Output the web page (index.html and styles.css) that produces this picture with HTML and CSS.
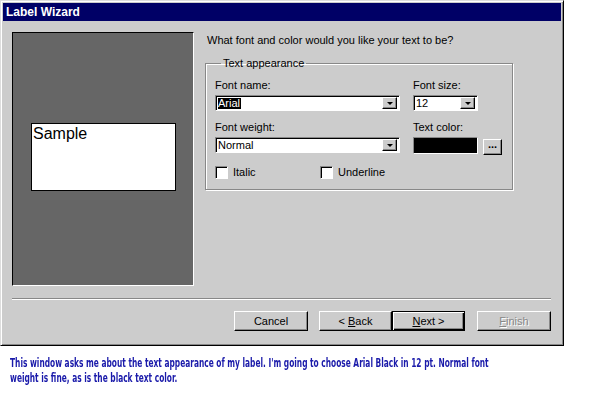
FILE: index.html
```html
<!DOCTYPE html>
<html lang="en">

<head>
    <meta charset="UTF-8">
    <title>Label Wizard</title>
    <link rel="stylesheet" href="styles.css">
</head>

<body>
    <div class="window">
        <div class="titleBar">Label Wizard</div>
        <div class="content">
            <div class="preview">
                <div class="sampleBox">Sample</div>
            </div>
            <div class="options">
                <p class="question">What font and color would you like your text to be?</p>
                <fieldset class="group">
                    <legend>Text appearance</legend>
                    <div class="grid">
                        <div class="field">
                            <label>Font name:</label>
                            <div class="combo"><span class="value selected">Arial</span><span class="arrow"></span></div>
                        </div>
                        <div class="field">
                            <label>Font size:</label>
                            <div class="combo small"><span class="value">12</span><span class="arrow"></span></div>
                        </div>
                        <div class="field">
                            <label>Font weight:</label>
                            <div class="combo"><span class="value">Normal</span><span class="arrow"></span></div>
                        </div>
                        <div class="field">
                            <label>Text color:</label>
                            <div class="colorRow">
                                <div class="swatch"></div>
                                <div class="btn dots">...</div>
                            </div>
                        </div>
                    </div>
                    <div class="checks">
                        <div class="check"><span class="box"></span>Italic</div>
                        <div class="check"><span class="box"></span>Underline</div>
                    </div>
                </fieldset>
            </div>
        </div>
        <div class="separator"></div>
        <div class="buttons">
            <div class="btn">Cancel</div>
            <div class="navBtns">
                <div class="btn"><span>&lt;&nbsp;<u>B</u>ack</span></div>
                <div class="btn default"><span><u>N</u>ext &gt;</span></div>
            </div>
            <div class="btn disabled"><span><u>F</u>inish</span></div>
        </div>
    </div>
    <div class="captionWrap">
        <p class="caption">This window asks me about the text appearance of my label. I'm going to choose Arial Black in 12 pt. Normal font weight is fine, as is the black text color.</p>
    </div>
</body>

</html>
```

FILE: styles.css
```css
* {
    padding: 0px;
    margin: 0px;
    box-sizing: border-box;
}

body {
    background-color: #fff;
    font-family: "Liberation Sans", Arial, sans-serif;
    font-size: 11px;
    color: #000;
}

.window {
    width: 564px;
    height: 346px;
    background-color: #ccc;
    border: 1px solid;
    border-color: #ddd #000 #000 #ddd;
    box-shadow: inset 1px 1px 0 #fff, inset -1px -1px 0 #888;
    padding: 2px;
}

.titleBar {
    height: 18px;
    background-color: #006;
    color: #fff;
    font-weight: bold;
    font-size: 12px;
    line-height: 18px;
    padding-left: 3px;
}

.content {
    display: flex;
    padding: 11px 0px 0px 9px;
}

.preview {
    width: 182px;
    height: 254px;
    background-color: #666;
    border: 1px solid;
    border-color: #000 #fff #fff #000;
    padding: 90px 0px 0px 18px;
}

.sampleBox {
    width: 145px;
    height: 68px;
    background-color: #fff;
    border: 1px solid #000;
    font-size: 16px;
    padding: 0px 1px;
    line-height: 20px;
}

.options {
    margin-left: 11px;
}

.question {
    margin-left: 2px;
    margin-top: 1px;
    height: 14px;
    line-height: 14px;
}

.group {
    margin-top: 10px;
    width: 308px;
    height: 133px;
    border: 1px solid #888;
    box-shadow: 1px 1px 0 #fff, inset 1px 1px 0 #fff;
    padding: 0px 9px;
}

.group legend {
    margin-left: 6px;
    padding: 0px 2px;
    line-height: 12px;
}

.grid {
    display: grid;
    grid-template-columns: 185px 65px;
    column-gap: 13px;
    row-gap: 10px;
    margin-top: 10px;
}

.field label {
    display: block;
    height: 16px;
    line-height: 13px;
}

.combo {
    display: flex;
    height: 16px;
    background-color: #fff;
    border: 1px solid;
    border-color: #888 #fff #fff #888;
    box-shadow: inset 1px 1px 0 #000;
    padding: 2px 2px 1px 2px;
}

.combo .value {
    flex: 1;
    line-height: 11px;
    font-size: 11px;
}

.combo .value.selected {
    flex: none;
    background-color: #000;
    color: #fff;
    padding-right: 1px;
}

.combo .selected + .arrow {
    margin-left: auto;
}

.arrow {
    position: relative;
    width: 15px;
    height: 12px;
    margin-top: -1px;
    background-color: #ccc;
    border: 1px solid;
    border-color: #fff #000 #000 #fff;
    box-shadow: inset -1px -1px 0 #888;
}

.arrow::after {
    content: "";
    position: absolute;
    left: 4px;
    top: 4px;
    border-left: 3px solid transparent;
    border-right: 3px solid transparent;
    border-top: 3px solid #000;
}

.colorRow {
    display: flex;
    gap: 5px;
}

.swatch {
    width: 65px;
    height: 17px;
    flex: none;
    background-color: #000;
    border: 1px solid;
    border-color: #888 #fff #fff #888;
}

.btn {
    display: flex;
    justify-content: center;
    align-items: center;
    width: 74px;
    height: 20px;
    background-color: #ccc;
    border: 1px solid;
    border-color: #fff #000 #000 #fff;
    box-shadow: inset -1px -1px 0 #888;
}

.btn.dots {
    width: 19px;
    height: 16px;
    flex: none;
    margin-top: 2px;
    font-weight: bold;
    line-height: 8px;
    align-items: flex-start;
}

.btn.default {
    border-color: #000;
    box-shadow: inset 1px 1px 0 #fff, inset -1px -1px 0 #000, inset -2px -2px 0 #888;
}

.btn.disabled {
    color: #888;
    text-shadow: 1px 1px 0 #fff;
}

.btn u {
    text-decoration: underline;
}

.checks {
    display: flex;
    margin-top: 11px;
}

.check {
    display: flex;
    align-items: center;
    gap: 5px;
    width: 105px;
    line-height: 13px;
}

.check .box {
    width: 13px;
    height: 13px;
    background-color: #fff;
    border: 1px solid;
    border-color: #888 #fff #fff #888;
    box-shadow: inset 1px 1px 0 #000;
}

.separator {
    margin: 12px 10px 0px 9px;
    height: 2px;
    border-top: 1px solid #888;
    border-bottom: 1px solid #fff;
}

.buttons {
    display: flex;
    margin-top: 11px;
    padding-left: 231px;
}

.navBtns {
    display: flex;
    margin-left: 11px;
}

.navBtns .btn {
    width: 73px;
}

.buttons .disabled {
    margin-left: 12px;
}

.captionWrap {
    margin: 10px 0px 0px 10px;
    width: 500px;
}

/* condensed face: squeeze the text horizontally */
.caption {
    width: 720px;
    transform: scaleX(0.69);
    transform-origin: left top;
    color: #1a1aaa;
    font-family: "DejaVu Sans Condensed", "Liberation Sans Narrow", sans-serif;
    font-weight: bold;
    font-size: 12px;
    line-height: 15px;
}
```
